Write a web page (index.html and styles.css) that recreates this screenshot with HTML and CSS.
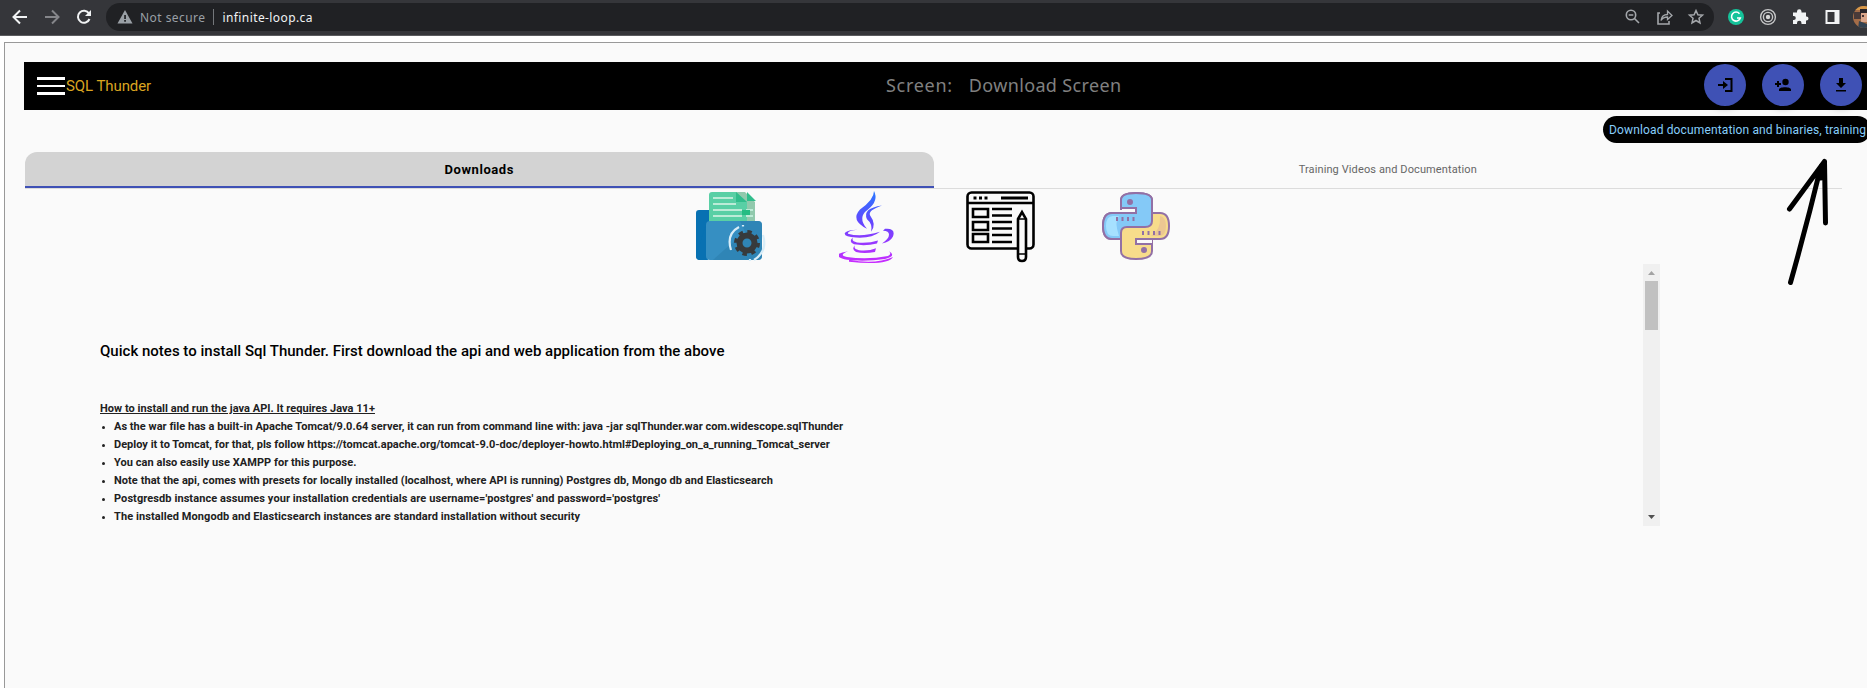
FILE: index.html
```html
<!DOCTYPE html>
<html lang="en">
<head>
<meta charset="utf-8">
<title>SQL Thunder</title>
<link rel="stylesheet" href="styles.css">
</head>
<body>
<header class="browser">
  <svg class="nav-icons" width="106" height="36" viewBox="0 0 106 36" fill="none" stroke-width="2">
    <path d="M27 17H14M20 10.500L13.500 17L20 23.500" stroke="#f1f3f4"/>
    <path d="M45 17H58M52 10.500L58.500 17L52 23.500" stroke="#85868a"/>
    <path d="M89 13.500A6 6 0 1 0 89.500 19" stroke="#f1f3f4"/><path d="M91 10V16H85Z" fill="#f1f3f4"/>
  </svg>
  <div class="address">
    <svg class="warn" width="16" height="14" viewBox="0 0 16 14"><path d="M8 0L15.500 13.500H.5Z" fill="#9aa0a6"/><path d="M7.200 5h1.700v4H7.200zM7.200 10h1.700v1.700H7.200z" fill="#202124"/></svg>
    <span class="insecure">Not secure</span>
    <span class="divider"></span>
    <span class="url">infinite-loop.ca</span>
    <svg class="address-icons" width="82" height="20" viewBox="0 0 82 20" fill="none" stroke="#a4a7ab" stroke-width="1.600">
      <circle cx="7" cy="8" r="4.700"/><path d="M10.500 11.500L15 16M4.700 8H9.300"/>
      <path d="M36 6H34V17H45V14"/><path d="M37 13.500C37.500 9.500 40 7.500 43.500 7.500V4L48 8.500L43.500 12.500V10C40.500 10 38.500 11 37 13.500Z" stroke-width="1.300"/>
      <path d="M72 3.500L73.900 7.800L78.500 8.200L75 11.300L76 16L72 13.500L68 16L69 11.300L65.500 8.200L70.100 7.800Z" stroke-width="1.500"/>
    </svg>
  </div>
  <svg class="extensions" width="140" height="36" viewBox="0 0 140 36" fill="none">
    <circle cx="9" cy="17" r="8" fill="#15c39a"/><path d="M12.500 13.700A4.500 4.500 0 1 0 13.300 18H10" stroke="#fff" stroke-width="1.600"/>
    <g stroke="#c6c7c8" stroke-width="1.400"><circle cx="41" cy="17" r="7.400"/><circle cx="41" cy="17" r="4.600"/></g><circle cx="41" cy="17" r="2.200" fill="#d5d5d5"/>
    <path d="M66 12.500h4v-1a2 2 0 0 1 4.500 0v1H79V16.500h.5a2 2 0 0 1 0 4H79V24H74.500v-1a2 2 0 0 0-4.500 0v1H66V20h.8a2 2 0 0 0 0-4H66Z" fill="#f1f3f4"/>
    <path d="M98.500 10h14v14h-14z" fill="#f1f3f4"/><path d="M100.500 12h7v10h-7z" fill="#35363a"/>
    <clipPath id="avatar"><circle cx="137" cy="17" r="11"/></clipPath>
    <g clip-path="url(#avatar)"><path d="M126 5h14v24h-14z" fill="#a46d48"/><path d="M126 5h14v5h-14z" fill="#d79848"/><path d="M127 12h7v7h-7z" fill="#493a39"/><path d="M133 9h7v5h-7z" fill="#29252a"/><path d="M134 13h6v9h-6z" fill="#d9a58a"/><path d="M135 15h2v2h-2z" fill="#433"/><path d="M132 21l8 3v5h-9z" fill="#334352"/></g>
  </svg>
</header>
<div class="page">
  <div class="toolbar">
    <div class="menu"><i class="bar"></i><i class="bar thin"></i><i class="bar"></i></div>
    <span class="brand">SQL Thunder</span>
    <div class="screen"><span class="screen-label">Screen:</span><span class="screen-name">Download Screen</span></div>
    <div class="actions">
      <span class="fab"><svg width="16" height="16" viewBox="0 0 16 16"><path d="M8 1h7.500v14H8v-2h5.500V3H8zM1 7h5V4l5 4-5 4V9H1z"/></svg></span>
      <span class="fab"><svg width="18" height="16" viewBox="0 0 18 16"><circle cx="11.500" cy="5" r="3.200"/><path d="M5 14v-1.500C5 9.500 17 9.500 17 12.500V14zM3 4h2v2h2v2H5v2H3V8H1V6h2z"/></svg></span>
      <span class="fab"><svg width="12" height="16" viewBox="0 0 12 16"><path d="M4 1h4v5h3l-5 5-5-5h3zM1 13h10v1.500H1z"/></svg></span>
    </div>
    <div class="tooltip"><span class="tooltip-text">Download documentation and binaries, training</span></div>
  </div>
  <div class="tabs">
    <div class="tab active"><span class="tab-main">Downloads</span></div>
    <div class="tab"><span class="tab-second">Training Videos and Documentation</span></div>
  </div>
  <div class="downloads">
    <svg class="folder" width="72" height="72" viewBox="0 0 72 72">
      <path d="M16 4q0-3 3-3H49L59 11V37H16Z" fill="#91c9ad"/><path d="M13 4q0-3 3-3H40L51 11V37H13Z" fill="#59cfa5"/><path d="M40 1L51 11H40ZM51 1L60 10H51Z" fill="#31bd8c"/>
      <path d="M17 7H37M17 13H40M17 19H46M17 25H46M50 19H57M50 25H57" stroke="#bcebd7" stroke-width="2"/>
      <path d="M46 19H54V24H46Z" fill="#25bc83"/><path d="M0 22Q0 19 3 19H13V31Q8 34 12 69H4Q0 69 0 65Z" fill="#0871b2"/>
      <rect x="10" y="30" width="56" height="39" rx="4" fill="#368fc2"/><path d="M44 30H62Q66 30 66 34V65Q66 69 62 69H17Q37 50 50 43Z" fill="#2c7ead" opacity=".6"/><path d="M0 65Q0 69 4 69H10V33Z" fill="#0871b2"/>
      <circle cx="51" cy="52" r="7.500" fill="none" stroke="#373a3c" stroke-width="6"/><circle cx="51" cy="52" r="11" fill="none" stroke="#373a3c" stroke-width="4" stroke-dasharray="4.300 4.340"/>
      <path d="M35 59Q30 43 43 36M47 34V35.500M67 44Q72 60 58 69M54 68V70" fill="none" stroke="#d8edf8" stroke-width="2.200"/>
    </svg>
    <svg class="java" width="56" height="74" viewBox="0 0 56 74" fill="none">
      <defs><linearGradient id="java" x1="0" y1="0" x2="0" y2="74" gradientUnits="userSpaceOnUse"><stop stop-color="#2979ff"/><stop offset=".45" stop-color="#6545ff"/><stop offset="1" stop-color="#c92cff"/></linearGradient></defs>
      <g fill="url(#java)" transform="scale(1 .97)"><path d="M35 0Q40 10 29 19Q18 27 28 39Q11 30 21 19Q35 9 35 0ZM43 15Q29 20 31 25Q38 35 32 42Q34 34 28 29Q23 18 43 15Z"/><path d="M19 40Q8 41 9 44Q22 48 41 42Q33 49 17 48Q4 47 6 43Q9 40 19 40ZM46 39Q57 38 54 47Q51 53 43 54Q50 49 50 45Q50 41 44 41ZM14 48Q12 52 18 53Q30 54 39 51L38 54Q27 57 15 55Q9 52 14 48ZM16 56Q14 60 20 61Q30 62 37 59L36 63Q25 65 17 63Q12 60 16 56ZM9 62Q-1 66 8 68Q28 71 49 67Q53 65 50 62Q58 67 46 70Q27 73 8 71Q-11 66 9 62ZM10 71Q37 76 54 68Q49 77 10 73Z"/></g>
    </svg>
    <svg class="web" width="70" height="72" viewBox="0 0 70 72" fill="none" stroke="#000" stroke-width="2.600">
      <rect x="1.500" y="1.500" width="66" height="56" rx="4"/><path d="M1 12H68"/><path d="M7.500 7h3M13 7h3M18.500 7h3" stroke-width="3"/><path d="M35 7H62" stroke-width="3"/><path d="M7 18H22V26H7ZM7 31H22V39H7ZM7 43H22V51H7Z"/><path d="M26 18H46M26 24.500H46M26 31H46M26 37.500H46M26 44H46M26 51H46"/>
      <path d="M52 28L56 21L60 28V66Q60 70 56 70Q52 70 52 66Z" fill="#fafafa"/><path d="M52 28H60M52 63H60" stroke-width="1.500"/>
    </svg>
    <svg class="python" width="68" height="68" viewBox="0 0 68 68" stroke="#9270a5" stroke-width="2">
      <path d="M19 18V8Q19 1 34 1Q50 1 50 8V21H58Q67 21 67 34Q67 47 58 47H50V59Q50 67 34 67Q19 67 19 59V47H10Q1 47 1 34Q1 21 10 21H34V16H19Z" fill="#f7dc8b"/>
      <path d="M19 16V8Q19 1 34 1Q50 1 50 8V29Q50 35 43 35H25Q19 35 19 41V47H10Q1 47 1 34Q1 21 10 21H34V16Z" fill="#84c9f7"/><path d="M50 47H34V52H50" fill="#fafafa"/>
      <path d="M4 34Q4 24 11 24H17Q12 29 17 44H11Q4 44 4 34Z" fill="#a6e1ff" stroke="none"/><path d="M58 24Q64 25 64 34Q64 44 57 44H49Q59 38 58 24Z" fill="#ecc792" stroke="none"/>
      <circle cx="28" cy="10" r="2" fill="#9270a5"/><circle cx="42" cy="58" r="2" fill="#9270a5"/><path d="M15 25v4M20.500 25v4M26 25v4M31.500 25v4M41 39v4M46.500 39v4M52 39v4M57.500 39v4"/>
    </svg>
  </div>
  <div class="notes">
    <div class="notes-body">
      <h1 class="notes-title">Quick notes to install Sql Thunder. First download the api and web application from the above</h1>
      <h2 class="subtitle">How to install and run the java API. It requires Java 11+</h2>
      <ul class="steps">
        <li class="s1">As the war file has a built-in Apache Tomcat/9.0.64 server, it can run from command line with: java -jar sqlThunder.war com.widescope.sqlThunder</li>
        <li class="s2">Deploy it to Tomcat, for that, pls follow https://tomcat.apache.org/tomcat-9.0-doc/deployer-howto.html#Deploying_on_a_running_Tomcat_server</li>
        <li class="s3">You can also easily use XAMPP for this purpose.</li>
        <li class="s4">Note that the api, comes with presets for locally installed (localhost, where API is running) Postgres db, Mongo db and Elasticsearch</li>
        <li class="s5">Postgresdb instance assumes your installation credentials are username='postgres' and password='postgres'</li>
        <li class="s6">The installed Mongodb and Elasticsearch instances are standard installation without security</li>
      </ul>
    </div>
    <div class="scrollbar">
      <svg width="7" height="4" viewBox="0 0 7 4"><path d="M0 4L3.500 0L7 4Z" fill="#a3a3a3"/></svg>
      <i class="thumb"></i>
      <svg class="down" width="7" height="4" viewBox="0 0 7 4"><path d="M0 0H7L3.500 4Z" fill="#505050"/></svg>
    </div>
  </div>
</div>
<svg class="arrow" width="50" height="130" viewBox="0 0 50 130" fill="none" stroke="#000" stroke-width="5" stroke-linecap="round" stroke-linejoin="round"><path d="M5.500 124.500Q22 66 36 8M4.500 51L39.500 3.500L40.500 65M36 20L39.500 3.500"/></svg>
</body>
</html>
```
FILE: styles.css
```css
* { box-sizing: border-box; }
body { margin: 0; width: 1867px; height: 688px; overflow: hidden; position: relative; background: #fff; font-family: Roboto, sans-serif; color: #212121; }
svg { display: block; flex: none; }
span { white-space: nowrap; }
.browser { display: flex; height: 36px; background: #35363a; border-bottom: 1px solid #5b5c5f; overflow: hidden; }
.address { display: flex; align-items: center; width: 1608px; height: 28px; margin-top: 3px; padding: 0 8px 0 11px; border-radius: 14px; background: #202124; font-family: "Noto Sans", sans-serif; font-size: 12px; flex: none; }
.insecure { margin-left: 7px; color: #9aa0a6; letter-spacing: .45px; }
.divider { width: 1px; height: 16px; margin: 0 9px 0 7px; background: #74777b; }
.url { color: #f1f3f4; letter-spacing: .4px; }
.address-icons { margin-left: auto; }
.extensions { margin-left: 13px; }
.page { height: 646px; margin: 6px 0 0 4px; padding: 19px 0 0 19px; border-top: 1px solid #999; border-left: 1px solid #999; background: #fafafa; }
.toolbar { position: relative; display: flex; align-items: center; height: 48px; padding-left: 13px; background: #000; }
.menu { display: flex; flex-direction: column; justify-content: space-between; width: 28px; height: 18px; }
.bar { height: 3px; background: #fff; }
.thin { height: 2px; }
.brand { width: 87px; margin-left: 1px; color: #daa520; font-size: 15px; letter-spacing: -.08px; }
.screen { display: flex; gap: 16px; margin: -3px 0 0 733px; color: #808080; font: 18px "Noto Sans", sans-serif; }
.screen-label { letter-spacing: .7px; }
.screen-name { letter-spacing: .36px; }
.actions { display: flex; gap: 16px; margin-left: auto; padding-right: 5px; margin-top: -2px; }
.fab { display: grid; place-items: center; width: 42px; height: 42px; border-radius: 50%; background: #3f51b5; box-shadow: 0 3px 6px rgba(0,0,0,.2); }
.tooltip { position: absolute; left: 1579px; top: 54px; display: flex; align-items: center; width: 268px; height: 27px; padding-left: 6px; border-radius: 14px; background: #000; color: #87cefa; font-size: 12px; letter-spacing: .14px; }
.tabs { display: flex; width: 1817px; height: 37px; margin: 42px 0 0 1px; border-bottom: 1px solid #dcdcdc; }
.tab { display: flex; align-items: center; justify-content: center; flex: 1; height: 36px; font-size: 11px; color: #666; }
.tab-second { letter-spacing: .11px; margin-top: -1px; }
.active { border-bottom: 2px solid #3f51b5; border-radius: 12px 12px 0 0; background: #d3d3d3; color: #000; font-size: 13px; font-weight: bold; letter-spacing: .55px; }
.tab-main { margin-top: 1px; }
.downloads { display: flex; height: 75px; padding: 2px 0 0 672px; }
.java { margin-left: 71px; }
.web { margin-left: 71px; }
.python { margin: 1px 0 0 66px; }
.notes { display: flex; width: 1636px; height: 262px; justify-content: space-between; }
.notes-body { padding: 77px 0 0 76px; }
.notes-title { margin: 0 0 39px; color: #000; font-size: 15px; line-height: 20px; font-weight: 500; letter-spacing: .013px; }
.subtitle { margin: 0; font-size: 11px; line-height: 18px; font-weight: bold; text-decoration: underline; white-space: nowrap; letter-spacing: .035px; }
.steps { margin: 0; padding: 0 0 0 14px; font-size: 11px; line-height: 18px; font-weight: bold; white-space: nowrap; }
.steps li::marker { font-size: 9px; }
.s1 { letter-spacing: .03px; }
.s2 { letter-spacing: .01px; }
.s3 { letter-spacing: .05px; }
.s4 { letter-spacing: .054px; }
.s5, .s6 { letter-spacing: .08px; }
.scrollbar { display: flex; flex-direction: column; align-items: center; width: 17px; padding: 7px 0; background: #f0f0f0; }
.thumb { width: 13px; height: 49px; margin-top: 6px; background: #c1c1c1; }
.down { margin-top: auto; }
.arrow { position: absolute; left: 1785px; top: 158px; }
```
